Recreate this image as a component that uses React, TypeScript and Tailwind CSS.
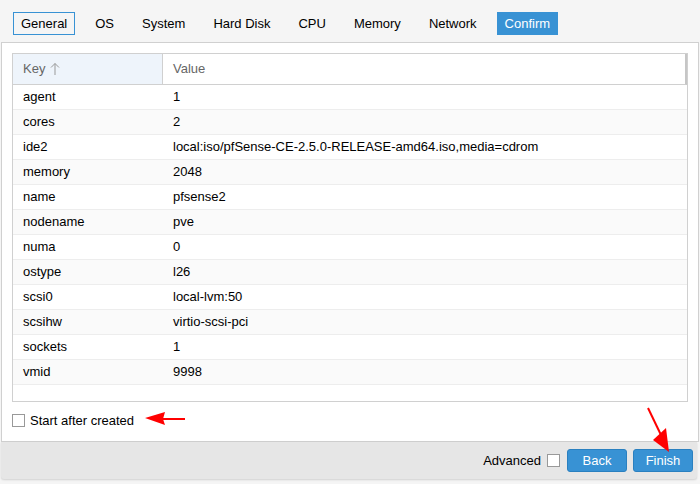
import React from "react";

const tabs = ["General", "OS", "System", "Hard Disk", "CPU", "Memory", "Network", "Confirm"];

const rows: [string, string][] = [
  ["agent", "1"],
  ["cores", "2"],
  ["ide2", "local:iso/pfSense-CE-2.5.0-RELEASE-amd64.iso,media=cdrom"],
  ["memory", "2048"],
  ["name", "pfsense2"],
  ["nodename", "pve"],
  ["numa", "0"],
  ["ostype", "l26"],
  ["scsi0", "local-lvm:50"],
  ["scsihw", "virtio-scsi-pci"],
  ["sockets", "1"],
  ["vmid", "9998"],
];

export default function App() {
  return (
    <div
      className="relative w-[700px] h-[484px] bg-[#f5f5f5] flex flex-col text-[13px] text-[#000] overflow-hidden"
      style={{ fontFamily: '"Liberation Sans", Arial, sans-serif' }}
    >
      {/* wizard tabs */}
      <div className="h-[42px] flex items-start pt-[12px] pl-[13px] gap-[12px]">
        {tabs.map((t, i) => {
          const active = t === "Confirm";
          const focused = i === 0;
          return (
            <div
              key={t}
              className={
                "h-[23px] px-[7px] flex items-center border leading-none " +
                (active
                  ? "bg-[#3892d4] border-[#3892d4] text-white"
                  : focused
                  ? "border-[#3892d4] text-[#000]"
                  : "border-transparent text-[#000]")
              }
            >
              {t}
            </div>
          );
        })}
      </div>

      {/* main panel */}
      <div className="mx-px h-[400px] border border-[#d0d0d0] bg-white flex flex-col px-[10px] pt-[10px]">
        <div className="h-[349px] border border-[#d0d0d0] flex flex-col">
          <div className="h-[31px] flex border-b border-[#d0d0d0] border-r-2 border-r-[#c6c6c6] text-[#666]">
            <div className="w-[150px] bg-[#eef4fb] border-r border-[#d0d0d0] flex items-center pl-[10px] gap-[5px]">
              <span>Key</span>
              <svg width="10" height="14" viewBox="0 0 10 14" className="text-[#999]">
                <path d="M5 13V1.5M1 5.5L5 1.5L9 5.5" fill="none" stroke="currentColor" strokeWidth="1" />
              </svg>
            </div>
            <div className="flex-1 flex items-center pl-[10px]">Value</div>
          </div>
          <div className="flex-1 flex flex-col">
            {rows.map(([k, v], i) => (
              <div
                key={k}
                className={
                  "h-[25px] flex items-center border-b border-[#ededed] text-[#000] " +
                  (i % 2 === 1 ? "bg-[#fafafa]" : "bg-white")
                }
              >
                <div className="w-[150px] pl-[10px]">{k}</div>
                <div className="flex-1 pl-[10px]">{v}</div>
              </div>
            ))}
          </div>
        </div>
        <div className="flex items-center mt-[9px] gap-[5px]">
          <span className="w-[13px] h-[13px] border border-[#999] bg-white" />
          <span>Start after created</span>
        </div>
      </div>

      {/* footer toolbar */}
      <div className="mx-px mr-[3px] h-[37px] bg-[#e6e6e6] rounded-b-[3px] flex items-center justify-end pr-[4px] shadow-[0_1px_2px_rgba(0,0,0,0.15)]">
        <span className="mr-[6px]">Advanced</span>
        <span className="w-[13px] h-[13px] border border-[#999] bg-white mr-[7px]" />
        <button className="w-[60px] h-[23px] rounded-[3px] bg-[#3892d4] border border-[#2a80c0] text-white mr-[6px]">
          Back
        </button>
        <button className="w-[60px] h-[23px] rounded-[3px] bg-[#3892d4] border border-[#2a80c0] text-white">
          Finish
        </button>
      </div>

      {/* red annotation arrows */}
      <svg className="absolute inset-0 pointer-events-none" width="700" height="484">
        <line x1="185" y1="419" x2="160" y2="419" stroke="#ff0000" strokeWidth="2" />
        <polygon points="145,418 165,412 163,419 165,425" fill="#ff0000" />
        <line x1="648" y1="408" x2="661" y2="435" stroke="#ff0000" strokeWidth="2" />
        <polygon points="669,452 653,440 666,428" fill="#ff0000" />
      </svg>
    </div>
  );
}
